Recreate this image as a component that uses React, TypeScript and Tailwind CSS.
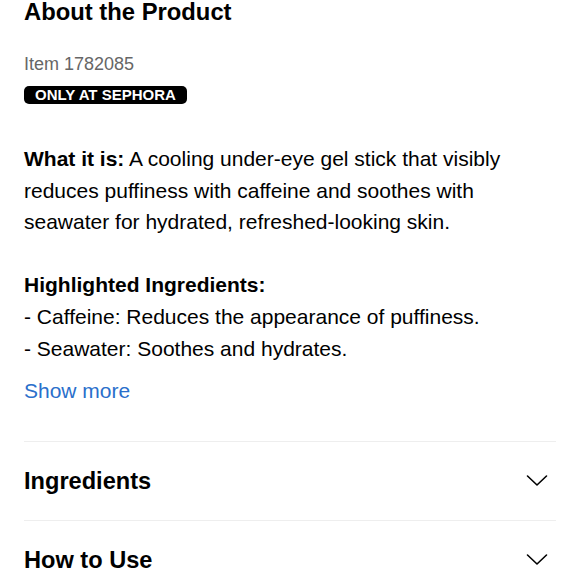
function Chevron() {
  return (
    <svg width="24" height="14" viewBox="0 0 24 14" fill="none" className="mr-[7px]">
      <polyline points="2.5,2 12,11 21.5,2" stroke="black" strokeWidth="1.6" strokeLinecap="round" strokeLinejoin="round" />
    </svg>
  );
}

function Section({ title }: { title: string }) {
  return (
    <button
      type="button"
      className="flex w-full items-center justify-between border-t border-[#eeeeee] py-[26px] text-left"
    >
      <span className="text-[23.6px] font-bold leading-[26px] text-black">{title}</span>
      <Chevron />
    </button>
  );
}

export default function App() {
  return (
    <div
      className="h-[580px] w-[580px] overflow-hidden bg-white px-6 text-black"
      style={{ fontFamily: '"Liberation Sans", Arial, sans-serif' }}
    >
      <h2 className="text-[23.8px] font-bold leading-[24px]">About the Product</h2>

      <p className="mt-[30px] text-[18px] leading-[20px] text-[#666666]">Item 1782085</p>
      <span className="mt-[12px] inline-block rounded-[5px] bg-black px-[11px] text-[15px] font-bold leading-[18px] text-white">
        ONLY AT SEPHORA
      </span>

      <p className="mt-[36px] text-[21px] leading-[31.5px]">
        <b>What it is:</b> A cooling under-eye gel stick that visibly reduces puffiness with caffeine
        and soothes with seawater for hydrated, refreshed-looking skin.
      </p>

      <div className="mt-[31.5px] text-[21px] leading-[32px]">
        <p className="font-bold">Highlighted Ingredients:</p>
        <p>- Caffeine: Reduces the appearance of puffiness.</p>
        <p>- Seawater: Soothes and hydrates.</p>
      </div>

      <button type="button" className="mt-[10px] text-[21px] leading-[32px] text-[#2a6fcb]">
        Show more
      </button>

      <div className="mt-[34px]">
        <Section title="Ingredients" />
        <Section title="How to Use" />
      </div>
    </div>
  );
}
